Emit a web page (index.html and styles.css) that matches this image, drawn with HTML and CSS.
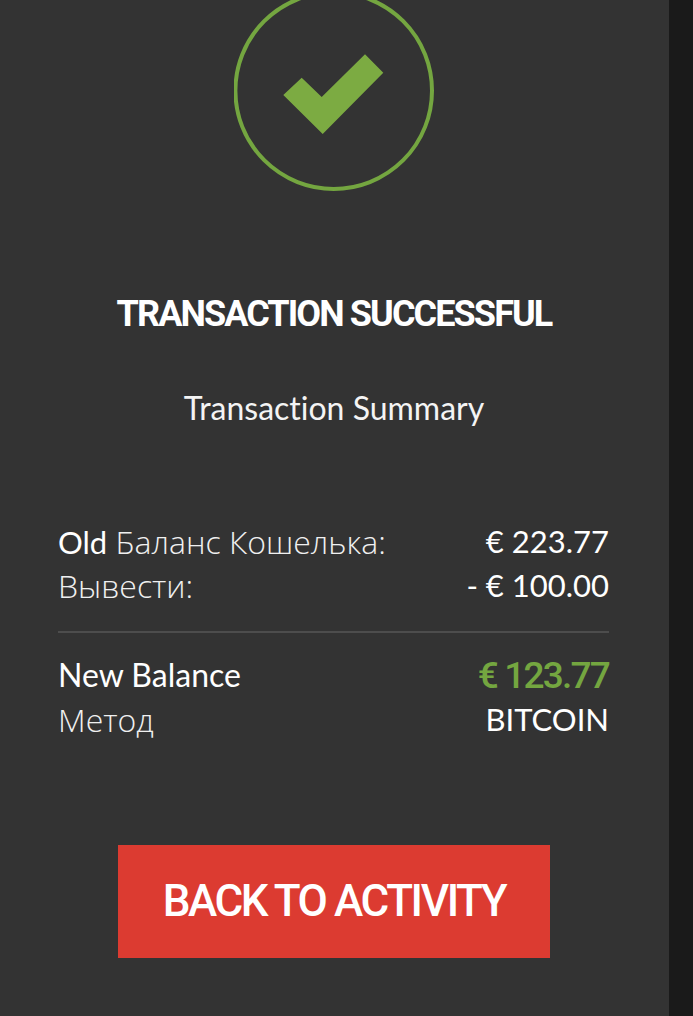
FILE: index.html
```html
<!DOCTYPE html>
<html lang="en">
<head>
    <meta charset="UTF-8">
    <meta name="viewport" content="width=device-width, initial-scale=1.0">
    <title>Transaction Successful</title>
    <link rel="stylesheet" href="styles.css">
</head>
<body>
    <div class="panel">
        <svg class="check-icon" viewBox="234 0 200 192" width="200" height="192">
            <circle cx="333.7" cy="90.7" r="98.3" fill="none" stroke="#74a640" stroke-width="4"/>
            <path d="M365 54.3 L383.3 72.7 L322.7 134 L283.3 95 L301.7 77.7 L321.7 97 Z" fill="#7cab42"/>
        </svg>

        <h1 class="title">TRANSACTION SUCCESSFUL</h1>
        <p class="subtitle">Transaction Summary</p>

        <div class="summary">
            <div class="row">
                <span class="label"><span class="strong">Old</span> Баланс Кошелька:</span>
                <span class="strong">€ 223.77</span>
            </div>
            <div class="row">
                <span class="label">Вывести:</span>
                <span class="strong">- € 100.00</span>
            </div>
            <div class="divider"></div>
            <div class="row">
                <span class="new-balance">New Balance</span>
                <span class="total">€ 123.77</span>
            </div>
            <div class="row">
                <span class="label">Метод</span>
                <span class="strong">BITCOIN</span>
            </div>
        </div>

        <a class="back-button" href="#">BACK TO ACTIVITY</a>
    </div>
    <div class="scroll-strip"></div>
</body>
</html>
```

FILE: styles.css
```css
body {
    margin: 0;
    height: 1016px;
    display: flex;
    overflow: hidden;
    background-color: #1a1a1a;
    font-family: "Lato", "Open Sans", sans-serif;
    font-variant-ligatures: none;
    color: #f4f4f4;
}
.panel {
    width: 668px;
    padding-right: 1px;
    height: 1016px;
    background-color: #333333;
    display: flex;
    flex-direction: column;
    align-items: center;
}
.scroll-strip {
    width: 24px;
    background-color: #1a1a1a;
}
.check-icon {
    display: block;
}
.title {
    margin: 100px 0 0 0;
    font-family: "Roboto", sans-serif;
    font-size: 36px;
    line-height: 44px;
    font-weight: 700;
    letter-spacing: -1.9px;
    color: #ffffff;
    white-space: nowrap;
}
.subtitle {
    margin: 52px 0 0 0;
    font-size: 32px;
    line-height: 40px;
    font-weight: 400;
}
.summary {
    width: 551px;
    margin: 91px 1px 0 0;
}
.row {
    display: flex;
    justify-content: space-between;
    align-items: center;
    height: 44px;
}
.label {
    font-family: "Open Sans", "Lato", sans-serif;
    font-weight: 300;
    font-size: 32px;
    color: #f0f0f0;
}
.strong {
    font-family: "Lato", "Open Sans", sans-serif;
    font-weight: 400;
    font-size: 31px;
    color: #ffffff;
}
.new-balance {
    font-family: "Lato", "Open Sans", sans-serif;
    font-weight: 400;
    font-size: 32px;
    line-height: 40px;
    color: #ffffff;
}
.total {
    font-family: "Roboto", sans-serif;
    font-weight: 500;
    font-size: 37px;
    letter-spacing: -1.8px;
    color: #74a640;
}
.divider {
    height: 2px;
    background-color: #4d4d4d;
    margin: 24px 0 20px 0;
}
.back-button {
    display: flex;
    align-items: center;
    justify-content: center;
    width: 432px;
    height: 111px;
    padding-bottom: 2px;
    margin-top: 104px;
    background-color: #dc3b31;
    color: #ffffff;
    font-family: "Roboto", sans-serif;
    font-size: 44px;
    font-weight: 500;
    letter-spacing: -2.4px;
    text-decoration: none;
}
```
